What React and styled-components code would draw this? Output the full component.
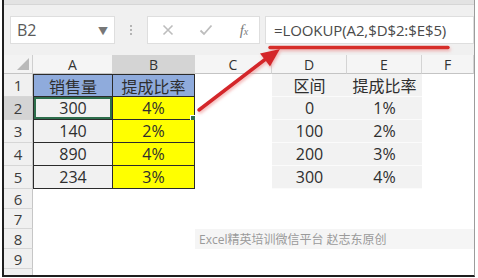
import React from 'react';
import styled, { createGlobalStyle } from 'styled-components';

const GlobalStyle = createGlobalStyle`
  html, body { margin: 0; padding: 0; background: #fff; }
  body { font-family: "Open Sans", "Noto Sans CJK SC", sans-serif; }
`;

const Page = styled.div`
  position: relative;
  width: 478px;
  height: 278px;
  overflow: hidden;
  background: #fff;
  padding-left: 2px;
  box-sizing: border-box;
`;

const Frame = styled.div`
  width: 473px;
  height: 277px;
  box-sizing: border-box;
  border-left: 2px solid #1e1e1e;
  border-bottom: 2px solid #1e1e1e;
  border-right: 1px solid #9c9c9c;
  display: flex;
  flex-direction: column;
  overflow: hidden;
`;

const TopStrip = styled.div`
  flex-shrink: 0;
  height: 4px;
  background: #e3e3e3;
  border-bottom: 1px solid #d6d6d6;
`;

const FormulaBar = styled.div`
  flex-shrink: 0;
  height: 50px;
  background: #f0f0f0;
  display: flex;
  align-items: center;
  padding-left: 6px;
`;

const Box = styled.div`
  height: 28px;
  background: #fff;
  border: 1px solid #dedede;
  box-sizing: border-box;
  display: flex;
  align-items: center;
`;

const NameBox = styled(Box)`
  width: 105px;
  justify-content: space-between;
  padding: 0 6px 0 6px;
  font-size: 16px;
  color: #5a5a5a;
  span { font-size: 10px; color: #777; }
`;

const Dots = styled.div`
  width: 32px;
  display: flex;
  flex-direction: column;
  align-items: center;
  gap: 2px;
  i { width: 2px; height: 2px; background: #b4b4b4; display: block; }
`;

const IconBox = styled(Box)`
  width: 113px;
  display: grid;
  grid-template-columns: repeat(3, 38px);
  padding-left: 1px;
  justify-items: center;
`;

const Fx = styled.div`
  font-family: "Liberation Serif", serif;
  font-style: italic;
  font-size: 15px;
  color: #7a7a7a;
  small { font-size: 10px; }
`;

const FormulaInput = styled(Box)`
  flex: 1;
  margin-left: 5px;
  padding-left: 8px;
  font-size: 15px;
  color: #4a4a4a;
  letter-spacing: -0.1px;
`;

const Sheet = styled.div`
  flex-shrink: 0;
  display: grid;
  grid-template-columns: 29px 80px 82px 77px 75px 75px 1fr;
  grid-template-rows: 19px repeat(5, 23px) repeat(5, 20px);
  background: #fff;
`;

const Corner = styled.div`
  background: #f3f3f3;
  border-right: 1px solid #cfcfcf;
  border-bottom: 1px solid #c4c4c4;
  position: relative;
  &::after {
    content: '';
    position: absolute;
    right: 3px;
    bottom: 3px;
    border-left: 12px solid transparent;
    border-bottom: 12px solid #b9b9b9;
  }
`;

const ColHead = styled.div`
  background: ${p => (p.$active ? '#d4d4d4' : '#f5f5f5')};
  border-right: 1px solid #d4d4d4;
  border-bottom: 1px solid #c4c4c4;
  display: flex;
  align-items: center;
  justify-content: center;
  font-size: 14px;
  color: #333;
`;

const RowHead = styled.div`
  background: ${p => (p.$active ? '#d4d4d4' : '#f0f0f0')};
  border-right: 1px solid #c6c6c6;
  border-bottom: 1px solid #d6d6d6;
  display: flex;
  align-items: center;
  justify-content: center;
  font-size: 15px;
  color: #3c3c3c;
`;

const fills = {
  head: '#8fabdc',
  yellow: '#ffff00',
  gray: '#f1f1f1',
  shade: '#f2f2f2',
  none: '#fff',
};

const Cell = styled.div`
  position: relative;
  box-sizing: border-box;
  background: ${p => fills[p.$fill || 'none']};
  display: flex;
  align-items: center;
  justify-content: center;
  font-size: 16px;
  color: #2e2e2e;
  ${p =>
    p.$boxed &&
    `border-right: 1px solid #2b2b2b; border-bottom: 1px solid #2b2b2b;`}
  ${p => p.$left && `border-left: 1px solid #2b2b2b;`}
  ${p => p.$top && `border-top: 1px solid #2b2b2b;`}
  ${p => p.$fill === 'shade' && `border-bottom: 1px solid #fbfbfb;`}
  ${p => p.$selected && `box-shadow: inset 0 0 0 2px #2e6e4c;`}
`;

const Handle = styled.span`
  position: absolute;
  right: -3px;
  bottom: -3px;
  width: 5px;
  height: 5px;
  background: #2e6e4c;
  border: 1px solid #fff;
`;

const Watermark = styled.div`
  grid-column: 4 / 8;
  background: #f5f5f5;
  display: flex;
  align-items: center;
  padding-left: 4px;
  font-size: 12px;
  color: #9a9a9a;
  white-space: nowrap;
`;

const Overlay = styled.svg`
  position: absolute;
  left: 0;
  top: 0;
  pointer-events: none;
`;

const cols = ['A', 'B', 'C', 'D', 'E', 'F'];

const rows = [
  { A: ['销售量', 'head'], B: ['提成比率', 'head'], D: ['区间', 'shade'], E: ['提成比率', 'shade'] },
  { A: ['300', 'gray'], B: ['4%', 'yellow'], D: ['0', 'shade'], E: ['1%', 'shade'] },
  { A: ['140', 'gray'], B: ['2%', 'yellow'], D: ['100', 'shade'], E: ['2%', 'shade'] },
  { A: ['890', 'gray'], B: ['4%', 'yellow'], D: ['200', 'shade'], E: ['3%', 'shade'] },
  { A: ['234', 'gray'], B: ['3%', 'yellow'], D: ['300', 'shade'], E: ['4%', 'shade'] },
  {}, {}, { watermark: true }, {}, {},
];

function App() {
  return (
    <Page>
      <GlobalStyle />
      <Frame>
        <TopStrip />
        <FormulaBar>
          <NameBox>
            B2<span>▼</span>
          </NameBox>
          <Dots><i /><i /><i /></Dots>
          <IconBox>
            <svg width="12" height="12" viewBox="0 0 12 12">
              <path d="M1.5 1.5 L10.5 10.5 M10.5 1.5 L1.5 10.5" stroke="#bdbdbd" strokeWidth="1.6" />
            </svg>
            <svg width="14" height="12" viewBox="0 0 14 12">
              <path d="M1.5 6.5 L5 10 L12.5 1.5" stroke="#bdbdbd" strokeWidth="1.8" fill="none" />
            </svg>
            <Fx>f<small>x</small></Fx>
          </IconBox>
          <FormulaInput>=LOOKUP(A2,$D$2:$E$5)</FormulaInput>
        </FormulaBar>
        <Sheet>
          <Corner />
          {cols.map(c => (
            <ColHead key={c} $active={c === 'B'}>{c}</ColHead>
          ))}
          {rows.map((r, i) => (
            <React.Fragment key={i}>
              <RowHead $active={i === 1}>{i + 1}</RowHead>
              {r.watermark ? (
                <>
                  <Cell />
                  <Cell />
                  <Watermark>Excel精英培训微信平台 赵志东原创</Watermark>
                </>
              ) : (
                cols.map(c => {
                  const v = r[c];
                  const boxed = c === 'A' || c === 'B';
                  return (
                    <Cell
                      key={c}
                      $fill={v ? v[1] : 'none'}
                      $boxed={v && boxed}
                      $left={v && c === 'A'}
                      $top={v && i === 0 && boxed}
                      $selected={i === 1 && c === 'A'}
                    >
                      {v ? v[0] : ''}
                      {i === 1 && c === 'B' && <Handle />}
                    </Cell>
                  );
                })
              )}
            </React.Fragment>
          ))}
        </Sheet>
      </Frame>
      <Overlay width="478" height="278" viewBox="0 0 478 278">
        <defs>
          <filter id="glow" x="-20%" y="-50%" width="140%" height="200%">
            <feDropShadow dx="1" dy="2" stdDeviation="1.5" floodColor="#e88" floodOpacity="0.6" />
          </filter>
        </defs>
        <g filter="url(#glow)">
          <line x1="270" y1="47.5" x2="448" y2="47.5" stroke="#d62d2b" strokeWidth="3.5" strokeLinecap="round" />
          <line x1="199" y1="110" x2="267" y2="58" stroke="#d4262a" strokeWidth="3.5" strokeLinecap="round" />
          <polygon points="280,49 270,66.5 260,53.5" fill="#d4262a" />
        </g>
      </Overlay>
    </Page>
  );
}

export default App;
